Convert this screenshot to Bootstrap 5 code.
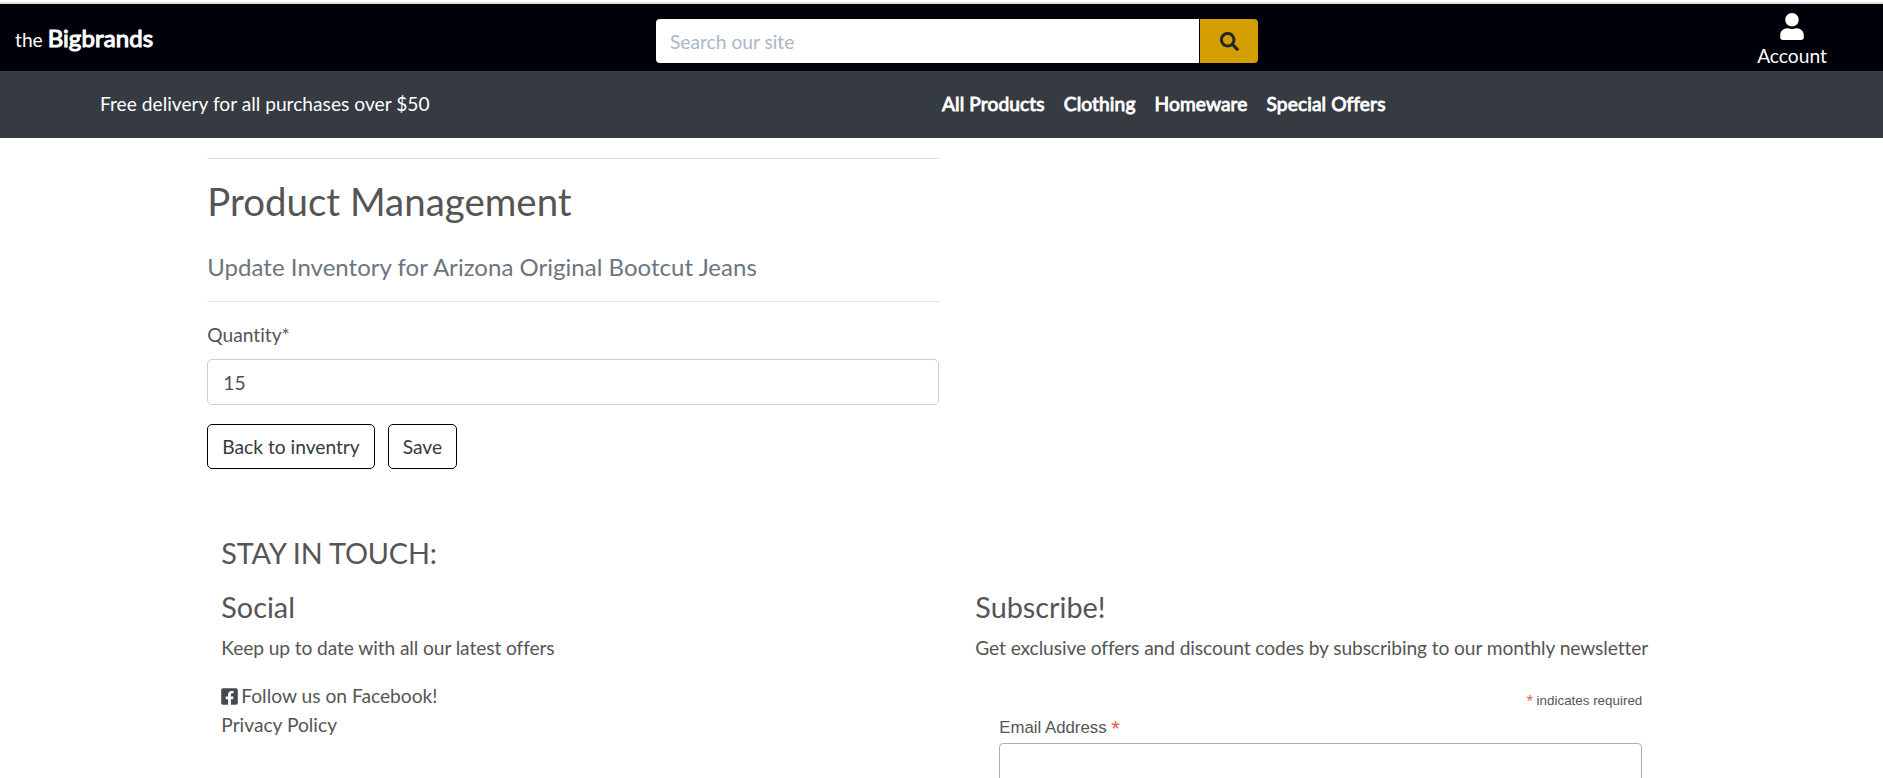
<!DOCTYPE html>
<html lang="en">
<head>
<meta charset="utf-8">
<meta name="viewport" content="width=device-width, initial-scale=1">
<title>the Bigbrands</title>
<link href="https://cdn.jsdelivr.net/npm/bootstrap@5.3.0/dist/css/bootstrap.min.css" rel="stylesheet">
<style>
html{font-size:19.2px;overflow:hidden}
body{font-family:Lato,sans-serif;color:#555;background:#fff;height:778px;overflow:hidden;border-top:2px solid #fff;line-height:1.5;font-variant-ligatures:none}
h2,h3,h4{line-height:1.2;font-weight:400;margin:0}
.topbar{background:#00000a;height:69px;border-top:2px solid #ddd;color:#fff}
.brand{padding-left:15px;width:656px;line-height:30px;margin-top:19px}
.brand strong{font-size:24px;font-weight:400;letter-spacing:.1px;-webkit-text-stroke:1.1px #fff}
.searchbox{width:602px;height:44px;margin-top:15px}
.searchbox .form-control{border:0;border-radius:4px 0 0 4px;padding:0 14px;height:44px;color:#555}
.searchbox .form-control::placeholder{color:#aab7c4;opacity:1}
.searchbox .btn{width:58px;margin-left:1px!important;border:0;border-radius:0 4px 4px 0;background:#d39e00;padding:0;height:44px}
.account{width:90px;margin-right:46px;margin-top:9px;line-height:29px}
.account svg{width:24px;height:27px}
.account div{margin-top:1px}
.menubar{background:#363a41;height:67px;color:#fff}
.delivery{padding-left:100px;width:942px}
.menulinks{gap:19px}
.menubar a{color:#fff;letter-spacing:.1px;-webkit-text-stroke:.9px #fff;text-decoration:none}
.page{width:80%;margin:0 auto}
.page>.row{--bs-gutter-x:36px;margin:0}
.formcol{padding:20px 0 0 19px;width:751px}
hr{margin:0;border-top:1px solid #e1e1e1;opacity:1}
.pagetitle{font-size:38.4px;line-height:46px;margin-top:19px;letter-spacing:.03px}
.subtitle{font-size:24px;line-height:29px;color:#6c757d;margin-top:28px;margin-bottom:20px;letter-spacing:.03px}
.qlabel{margin-top:18px;line-height:29px;margin-bottom:10px}
.qty{height:46px;border:1px solid #ccd0d4;border-radius:5px;padding:1px 15px 0;color:#495057;font-size:19.2px}
.btn-act{border:1px solid #000;border-radius:5px;padding:0 14px;height:45px;line-height:42px;color:#343a40;background:#fff}
.acts{margin-top:19px;gap:13px}
.foot{padding-left:33px}
.foot h3{font-size:28.8px;line-height:35px}
.foot .touch{margin-top:67px;margin-bottom:19px;letter-spacing:-.15px}
.foot p{margin:8px 0 0;line-height:29px;letter-spacing:-.1px}
.foot a{color:#555;text-decoration:none;line-height:29px}
.links{margin-top:19px}
.socialcol{width:754px}
.fb{width:17px;height:19px;vertical-align:-2.5px;margin-right:-2px}
.signup{font-family:"Liberation Sans",Arial,sans-serif;margin:29px 0 0 24px;width:643px}
.signup .req{color:#e85c41}
.indicates{font-size:13.4px;line-height:20px;text-align:right}
.indicates .req{font-size:16px;line-height:14px;vertical-align:-2px}
.signup label{font-size:16.8px;line-height:22px;margin-top:6px;margin-bottom:4px}
.signup .star{font-size:22px;line-height:16px;vertical-align:-3px}
.signup .form-control{height:46px;border:1px solid #abb0b2;border-radius:4px}
</style>
</head>
<body>
<header class="topbar d-flex align-items-start">
  <div class="brand">the <strong>Bigbrands</strong></div>
  <form class="searchbox input-group flex-nowrap">
    <input class="form-control" type="search" placeholder="Search our site" aria-label="Search">
    <button class="btn" type="button" aria-label="Search"><svg class="d-block mx-auto" width="19" height="19" viewBox="0 0 512 512" fill="#212529"><path d="M505 442.700 405.300 343c-4.500-4.500-10.600-7-17-7H372c27.600-35.300 44-79.700 44-128C416 93.100 322.900 0 208 0S0 93.100 0 208s93.100 208 208 208c48.300 0 92.700-16.400 128-44v16.300c0 6.400 2.500 12.500 7 17l99.700 99.700c9.400 9.400 24.600 9.400 33.900 0l28.300-28.300c9.400-9.400 9.400-24.600.1-34zM208 336c-70.700 0-128-57.200-128-128 0-70.700 57.200-128 128-128 70.700 0 128 57.200 128 128 0 70.700-57.200 128-128 128z"/></svg></button>
  </form>
  <div class="account ms-auto text-center">
    <svg class="d-block mx-auto" viewBox="0 0 448 512" fill="#fff"><path d="M224 256c70.700 0 128-57.300 128-128S294.700 0 224 0 96 57.300 96 128s57.300 128 128 128zm89.600 32h-16.700c-22.200 10.200-46.900 16-72.900 16s-50.600-5.800-72.900-16h-16.700C60.200 288 0 348.200 0 422.400V464c0 26.500 21.500 48 48 48h352c26.500 0 48-21.500 48-48v-41.600c0-74.200-60.200-134.400-134.400-134.400z"/></svg>
    <div>Account</div>
  </div>
</header>
<nav class="menubar d-flex align-items-center">
  <div class="delivery">Free delivery for all purchases over $50</div>
  <div class="menulinks d-flex"><a href="#">All Products</a><a href="#">Clothing</a><a href="#">Homeware</a><a href="#">Special Offers</a></div>
</nav>
<main class="page">
  <div class="row">
    <div class="formcol">
      <hr>
      <h2 class="pagetitle">Product Management</h2>
      <h4 class="subtitle">Update Inventory for Arizona Original Bootcut Jeans</h4>
      <hr>
      <label class="d-block qlabel" for="qty">Quantity*</label>
      <input id="qty" class="form-control qty" value="15">
      <div class="d-flex acts"><button class="btn btn-act" type="button">Back to inventry</button><button class="btn btn-act" type="button">Save</button></div>
    </div>
  </div>
</main>
<footer class="page foot">
  <h3 class="touch">STAY IN TOUCH:</h3>
  <div class="d-flex">
    <div class="socialcol">
      <h3>Social</h3>
      <p>Keep up to date with all our latest offers</p>
      <div class="links d-flex flex-column"><a href="#"><svg class="fb" viewBox="0 0 448 512" fill="#444a50"><path d="M400 32H48A48 48 0 0 0 0 80v352a48 48 0 0 0 48 48h137.300V327.700h-63V256h63v-54.600c0-62.200 37-96.500 93.700-96.500 27.100 0 55.500 4.800 55.500 4.800v61h-31.300c-30.800 0-40.400 19.100-40.400 38.700V256h68.800l-11 71.700h-57.800V480H400a48 48 0 0 0 48-48V80a48 48 0 0 0-48-48z"/></svg> Follow us on Facebook!</a><a href="#">Privacy Policy</a></div>
    </div>
    <div>
      <h3>Subscribe!</h3>
      <p class="text-nowrap">Get exclusive offers and discount codes by subscribing to our monthly newsletter</p>
      <div class="signup">
        <div class="indicates"><span class="req">*</span> indicates required</div>
        <label class="d-block" for="email">Email Address <span class="req star">*</span></label>
        <input id="email" class="form-control" type="email">
      </div>
    </div>
  </div>
</footer>
<script src="https://cdn.jsdelivr.net/npm/bootstrap@5.3.0/dist/js/bootstrap.bundle.min.js"></script>
</body>
</html>
